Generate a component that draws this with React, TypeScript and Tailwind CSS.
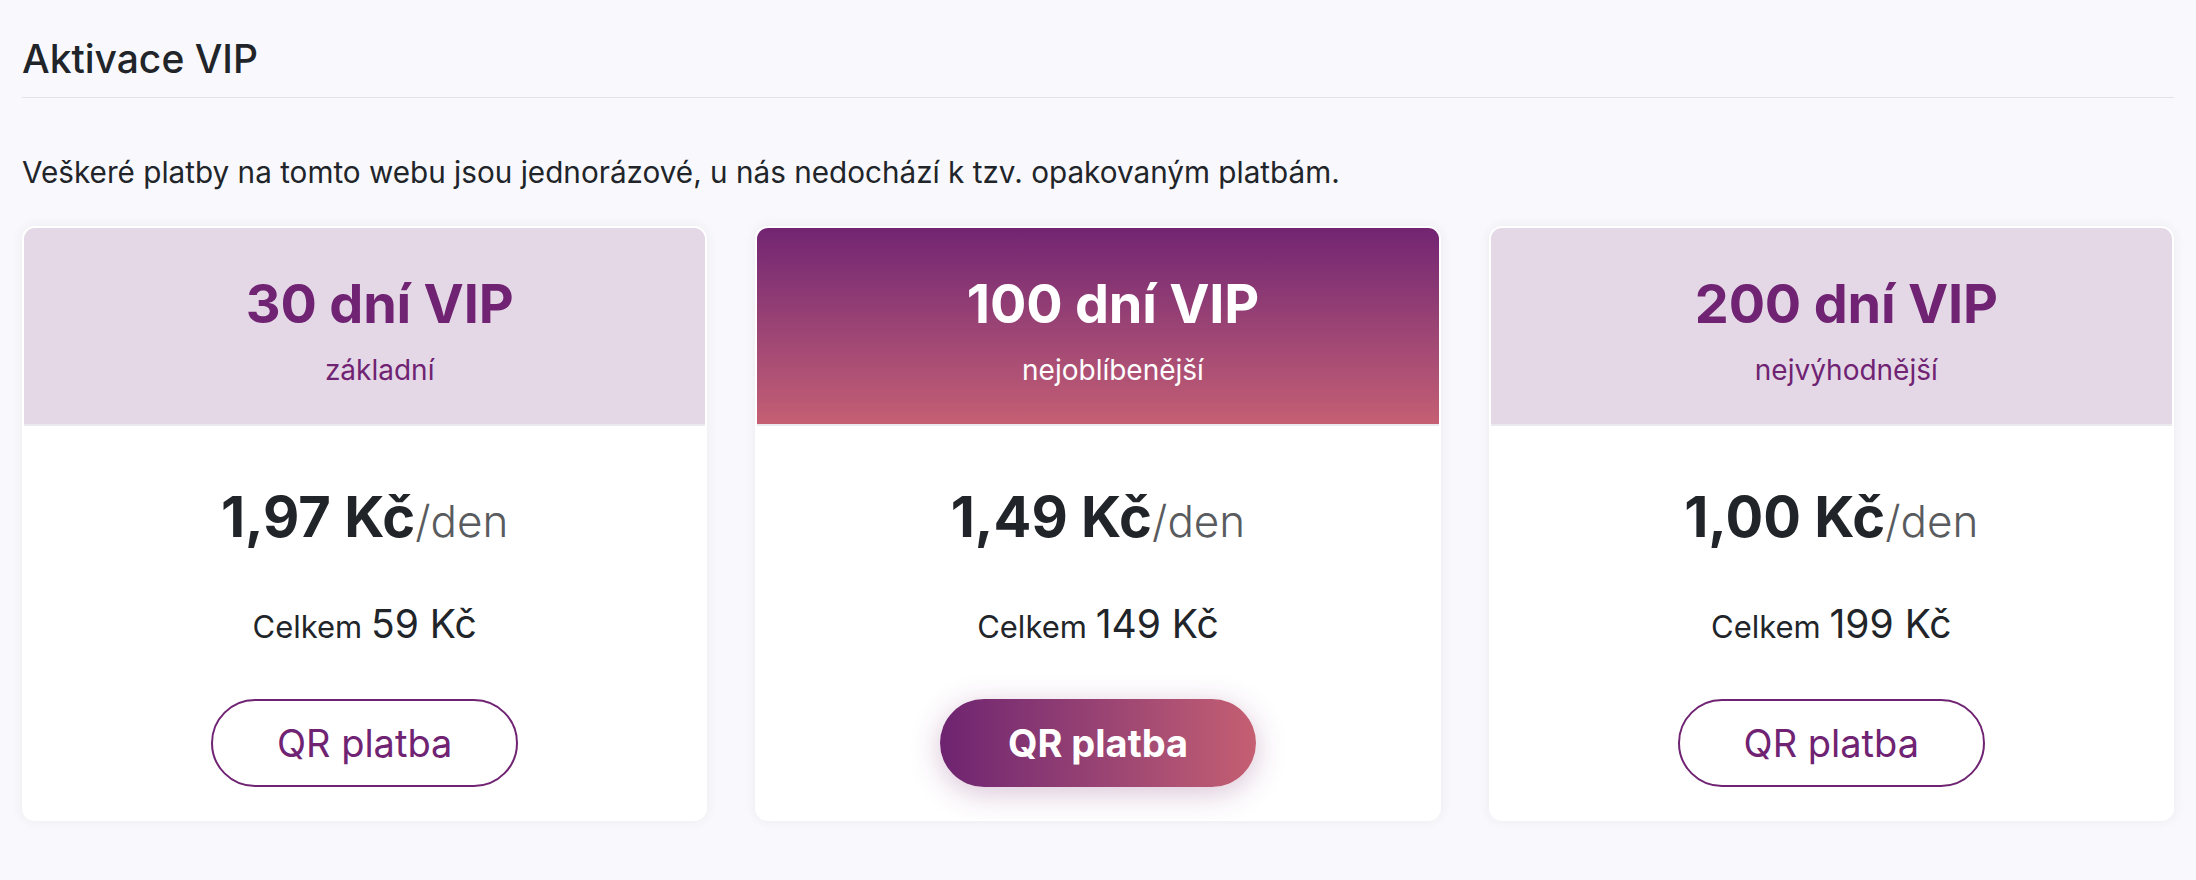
import React from 'react';

type Plan = {
  days: number;
  label: string;
  perDay: string;
  total: string;
  featured?: boolean;
};

const PLANS: Plan[] = [
  { days: 30, label: 'základní', perDay: '1,97 Kč', total: '59 Kč' },
  { days: 100, label: 'nejoblíbenější', perDay: '1,49 Kč', total: '149 Kč', featured: true },
  { days: 200, label: 'nejvýhodnější', perDay: '1,00 Kč', total: '199 Kč' },
];

function PlanCard({ plan }: { plan: Plan }) {
  return (
    <div className="flex flex-col overflow-hidden rounded-[13px] border-2 border-white bg-white shadow-[0_0_12px_rgba(40,20,60,0.07)]">
      <div
        className={[
          'border-b-2 border-[#ebe8ee] pt-[43px] pb-[33px] pl-[30px] text-center',
          plan.featured
            ? 'bg-gradient-to-b from-[#722472] to-[#c55f73] text-white'
            : 'bg-[#e4d8e6] text-[#6f2372]',
        ].join(' ')}
      >
        <h2 className="text-[54px] font-bold leading-[65px] tracking-[-0.2px]">{plan.days} dní VIP</h2>
        <p className="mt-[13px] text-[28px] leading-[42px]">{plan.label}</p>
      </div>
      <div className="flex flex-col items-center pt-[58px] pb-[32px] text-[#212529]">
        <p className="leading-[67px]">
          <span className="text-[56px] font-bold">{plan.perDay}</span>
          <span className="text-[44px] font-light text-[#595b5e]">/den</span>
        </p>
        <p className="mt-[35px] leading-[47px]">
          <span className="text-[31px]">Celkem </span>
          <span className="text-[39px]">{plan.total}</span>
        </p>
        {plan.featured ? (
          <button className="mt-[43px] h-[88px] rounded-full bg-gradient-to-r from-[#6e2370] to-[#c55f72] px-[68px] text-[38px] font-bold text-white shadow-[0_6px_30px_rgba(120,40,110,0.28)]">
            QR platba
          </button>
        ) : (
          <button className="mt-[43px] h-[88px] rounded-full border-2 border-[#6f2372] bg-white px-[64px] text-[38px] text-[#6f2372]">
            QR platba
          </button>
        )}
      </div>
    </div>
  );
}

export default function App() {
  return (
    <div className="min-h-screen bg-[#f9f9fd] px-[22px] pt-[35px] pb-[40px] font-['Inter',sans-serif] text-[#212529]">
      <h1 className="border-b-[1.5px] border-[#e4e4e8] pb-[15px] text-[39px] font-medium leading-[47px]">Aktivace VIP</h1>
      <p className="mt-[53px] text-[29.7px] leading-[42px]">
        Veškeré platby na tomto webu jsou jednorázové, u nás nedochází k tzv. opakovaným platbám.
      </p>
      <div className="mt-[33px] grid grid-cols-3 gap-[48px]">
        {PLANS.map((p) => (
          <PlanCard key={p.days} plan={p} />
        ))}
      </div>
    </div>
  );
}
